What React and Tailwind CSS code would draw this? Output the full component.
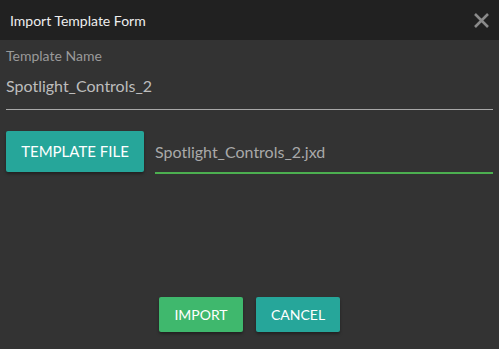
import { useState } from 'react';

export default function App() {
  const [nombre, setNombre] = useState('Spotlight_Controls_2');
  const [archivo] = useState('Spotlight_Controls_2.jxd');

  return (
    <div
      className="w-[499px] h-[349px] bg-[#333333] flex flex-col overflow-hidden"
      style={{ fontFamily: '"Lato", "Open Sans", sans-serif' }}
    >
      <div className="h-[40px] bg-[#212121] flex items-center justify-between pl-[10px] pr-[9px] shrink-0">
        <span className="text-[14px] text-[#eeeeee]">Import Template Form</span>
        <button className="text-[#8a8a8a]">
          <svg width="17" height="17" viewBox="0 0 17 17">
            <path d="M2 2 L15 15 M15 2 L2 15" stroke="currentColor" strokeWidth="2.6" />
          </svg>
        </button>
      </div>

      <div className="flex-1 flex flex-col px-[6px]">
        <label className="mt-[6px] text-[14px] leading-[20px] text-[#9a9a9a]">Template Name</label>
        <input
          value={nombre}
          onChange={(e) => setNombre(e.target.value)}
          className="mt-[3px] h-[41px] w-[487px] bg-transparent text-[16px] text-[#bdbdbd] border-b border-[#a8a8a8] outline-none pb-[7px]"
        />

        <div className="mt-[21px] flex items-start gap-[11px]">
          <button className="w-[138px] h-[41px] bg-[#26a69a] rounded-[2px] text-white text-[15px] shadow-[0_2px_3px_rgba(0,0,0,0.35)]">
            TEMPLATE FILE
          </button>
          <div className="w-[338px] h-[43px] border-b-2 border-[#4caf50] flex items-center text-[16px] text-[#a9a9a9]">
            {archivo}
          </div>
        </div>

        <div className="mt-auto mb-[17px] flex justify-center gap-[13px]">
          <button className="w-[84px] h-[35px] bg-[#3fb86d] rounded-[2px] text-white text-[14px] shadow-[0_2px_3px_rgba(0,0,0,0.35)]">
            IMPORT
          </button>
          <button className="w-[84px] h-[35px] bg-[#26a69a] rounded-[2px] text-white text-[14px] shadow-[0_2px_3px_rgba(0,0,0,0.35)]">
            CANCEL
          </button>
        </div>
      </div>
    </div>
  );
}
